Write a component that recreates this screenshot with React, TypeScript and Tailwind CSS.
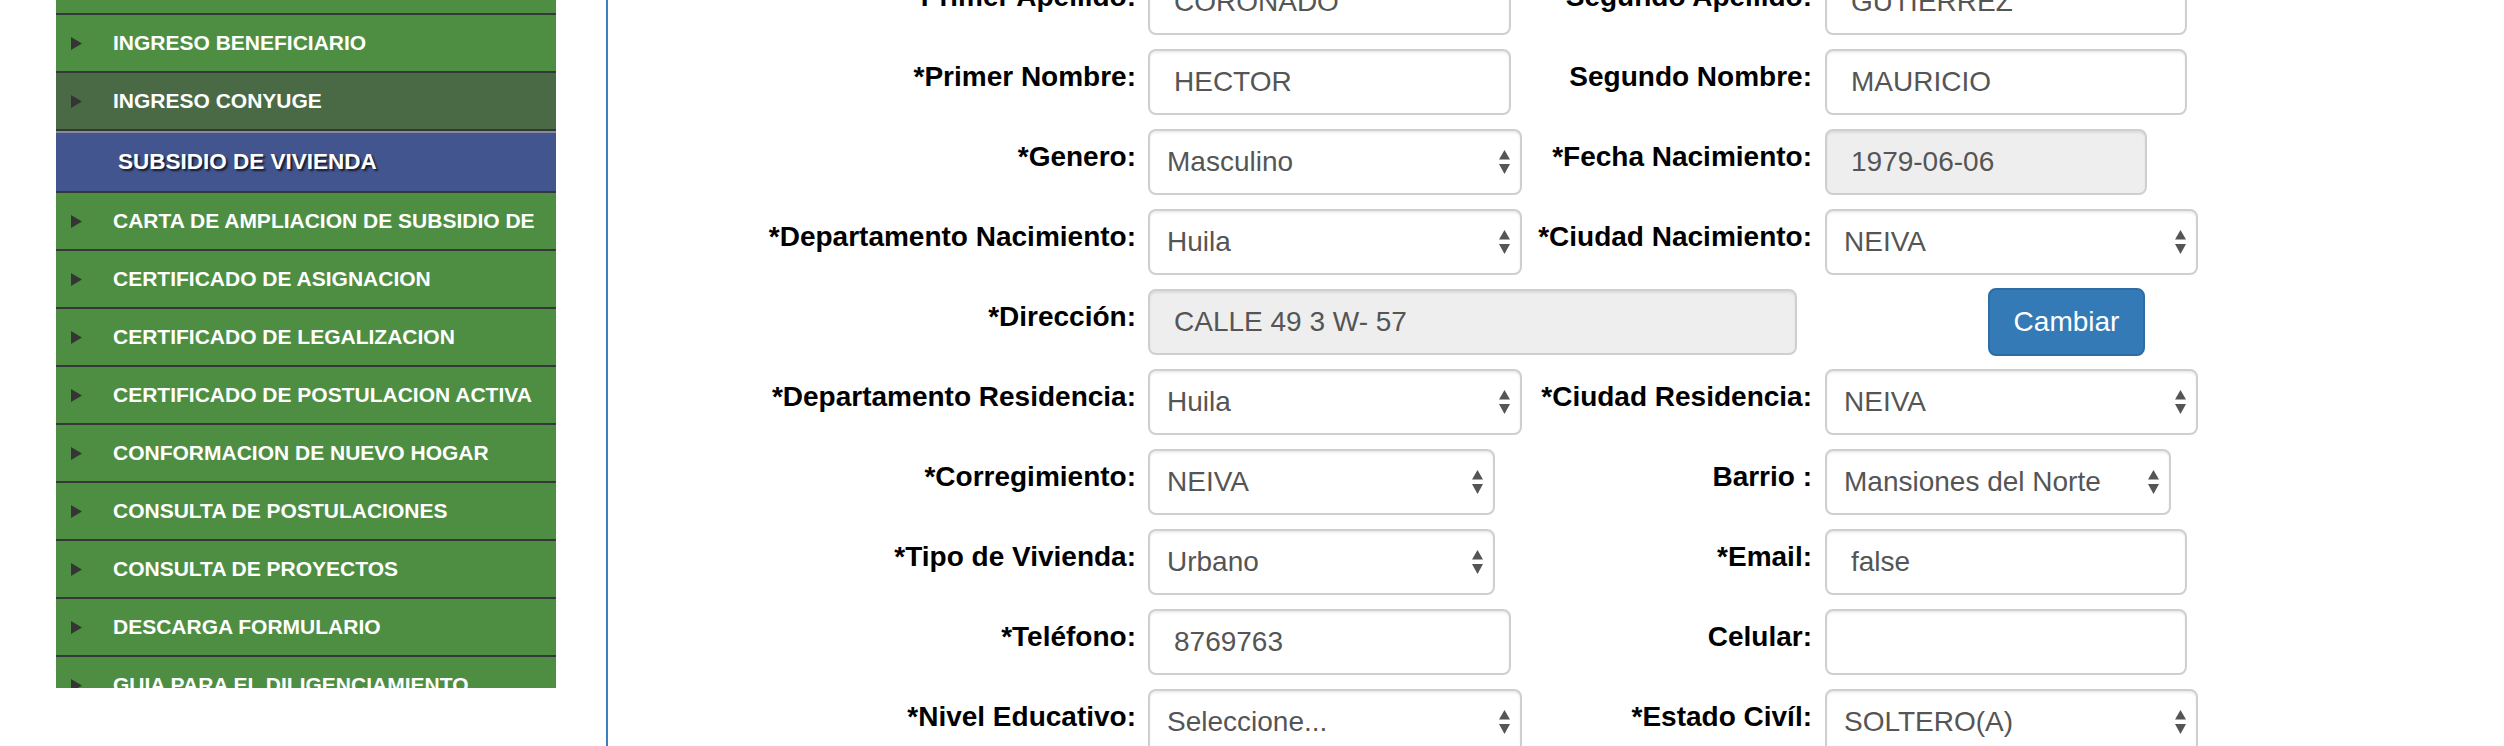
import React from 'react';

const MENU = [
  { label: 'INICIO', tone: 'green' },
  { label: 'INGRESO BENEFICIARIO', tone: 'green' },
  { label: 'INGRESO CONYUGE', tone: 'hover' },
  { label: 'SUBSIDIO DE VIVIENDA', tone: 'active' },
  { label: 'CARTA DE AMPLIACION DE SUBSIDIO DE', tone: 'green' },
  { label: 'CERTIFICADO DE ASIGNACION', tone: 'green' },
  { label: 'CERTIFICADO DE LEGALIZACION', tone: 'green' },
  { label: 'CERTIFICADO DE POSTULACION ACTIVA', tone: 'green' },
  { label: 'CONFORMACION DE NUEVO HOGAR', tone: 'green' },
  { label: 'CONSULTA DE POSTULACIONES', tone: 'green' },
  { label: 'CONSULTA DE PROYECTOS', tone: 'green' },
  { label: 'DESCARGA FORMULARIO', tone: 'green' },
  { label: 'GUIA PARA EL DILIGENCIAMIENTO', tone: 'green' },
];

function Caret() {
  return (
    <svg width="11" height="13" viewBox="0 0 11 13" className="shrink-0">
      <polygon points="0,0 11,6.5 0,13" fill="#353535" />
    </svg>
  );
}

function MenuItem({ label, tone }: { label: string; tone: string }) {
  if (tone === 'active') {
    return (
      <div className="h-[62px] border-t-2 border-b-2 border-t-[#878c9b] border-b-[#35383b] bg-[#43558f] flex items-center pl-[62px]">
        <span className="text-[22.5px] font-bold text-white whitespace-nowrap [text-shadow:2px_2px_2px_rgba(0,0,0,0.7)]">
          {label}
        </span>
      </div>
    );
  }
  return (
    <div
      className={
        tone === 'hover'
          ? 'h-[58px] border-b-2 border-[#35383b] bg-[#4a6a45] flex items-center pl-[15px]'
          : 'h-[58px] border-b-2 border-[#35383b] bg-[#4e8e43] flex items-center pl-[15px]'
      }
    >
      <Caret />
      <span className="ml-[31px] text-[21px] font-bold text-white whitespace-nowrap">{label}</span>
    </div>
  );
}

function Label({ text, width }: { text: string; width: string }) {
  return (
    <div className={`${width} shrink-0 text-right pt-[8px] text-[28px] leading-[40px] font-bold text-black whitespace-nowrap`}>
      {text}
    </div>
  );
}

function TextBox({ value, width, disabled }: { value: string; width: string; disabled?: boolean }) {
  return (
    <input
      readOnly
      value={value}
      className={`${width} h-[66px] shrink-0 border-2 border-[#cfcfcf] rounded-[8px] px-[24px] text-[28px] text-[#555] outline-none shadow-[inset_0_2px_2px_rgba(0,0,0,0.075)] ${
        disabled ? 'bg-[#eeeeee]' : 'bg-white'
      }`}
    />
  );
}

function SelectBox({ value, width }: { value: string; width: string }) {
  return (
    <div className={`${width} h-[66px] shrink-0 relative`}>
      <select
        value={value}
        onChange={() => {}}
        className="w-full h-full appearance-none border-2 border-[#cfcfcf] rounded-[8px] pl-[17px] pr-[36px] text-[28px] text-[#555] bg-white outline-none shadow-[inset_0_2px_2px_rgba(0,0,0,0.075)]"
      >
        <option value={value}>{value}</option>
      </select>
      {/* double arrow like the native select */}
      <svg
        width="11"
        height="24"
        viewBox="0 0 11 24"
        className="absolute right-[12px] top-1/2 -translate-y-1/2 pointer-events-none"
      >
        <polygon points="0,9.5 5.5,0 11,9.5" fill="#555" />
        <polygon points="0,14 11,14 5.5,24" fill="#555" />
      </svg>
    </div>
  );
}

function Row({ children }: { children: React.ReactNode }) {
  return <div className="flex items-start h-[66px]">{children}</div>;
}

export default function App() {
  const L1 = 'w-[528px]';
  const L2 = 'w-[282px]';

  return (
    <div className="w-[2504px] h-[746px] overflow-hidden bg-white flex items-start font-['Liberation_Sans',Arial,sans-serif]">
      {/* Side menu */}
      <div className="ml-[56px] w-[500px] h-[688px] overflow-hidden shrink-0">
        <div className="-mt-[43px]">
          {MENU.map((m) => (
            <MenuItem key={m.label} label={m.label} tone={m.tone} />
          ))}
        </div>
      </div>

      {/* Form panel */}
      <div className="ml-[50px] h-[746px] flex-1 border-l-2 border-[#3a7fc0] overflow-hidden">
        <div className="-mt-[31px] flex flex-col gap-[14px]">
          <Row>
            <Label text="*Primer Apellido:" width={L1} />
            <div className="ml-[12px] w-[382px] shrink-0">
              <TextBox value="CORONADO" width="w-[363px]" />
            </div>
            <Label text="Segundo Apellido:" width={L2} />
            <div className="ml-[13px]">
              <TextBox value="GUTIERREZ" width="w-[362px]" />
            </div>
          </Row>

          <Row>
            <Label text="*Primer Nombre:" width={L1} />
            <div className="ml-[12px] w-[382px] shrink-0">
              <TextBox value="HECTOR" width="w-[363px]" />
            </div>
            <Label text="Segundo Nombre:" width={L2} />
            <div className="ml-[13px]">
              <TextBox value="MAURICIO" width="w-[362px]" />
            </div>
          </Row>

          <Row>
            <Label text="*Genero:" width={L1} />
            <div className="ml-[12px] w-[382px] shrink-0">
              <SelectBox value="Masculino" width="w-[374px]" />
            </div>
            <Label text="*Fecha Nacimiento:" width={L2} />
            <div className="ml-[13px]">
              <TextBox value="1979-06-06" width="w-[322px]" disabled />
            </div>
          </Row>

          <Row>
            <Label text="*Departamento Nacimiento:" width={L1} />
            <div className="ml-[12px] w-[382px] shrink-0">
              <SelectBox value="Huila" width="w-[374px]" />
            </div>
            <Label text="*Ciudad Nacimiento:" width={L2} />
            <div className="ml-[13px]">
              <SelectBox value="NEIVA" width="w-[373px]" />
            </div>
          </Row>

          <Row>
            <Label text="*Dirección:" width={L1} />
            <div className="ml-[12px]">
              <TextBox value="CALLE 49 3 W- 57" width="w-[649px]" disabled />
            </div>
            <button className="ml-[191px] -mt-px w-[157px] h-[68px] shrink-0 rounded-[8px] border-2 border-[#2e6da4] bg-[#337ab7] text-white text-[28px]">
              Cambiar
            </button>
          </Row>

          <Row>
            <Label text="*Departamento Residencia:" width={L1} />
            <div className="ml-[12px] w-[382px] shrink-0">
              <SelectBox value="Huila" width="w-[374px]" />
            </div>
            <Label text="*Ciudad Residencia:" width={L2} />
            <div className="ml-[13px]">
              <SelectBox value="NEIVA" width="w-[373px]" />
            </div>
          </Row>

          <Row>
            <Label text="*Corregimiento:" width={L1} />
            <div className="ml-[12px] w-[382px] shrink-0">
              <SelectBox value="NEIVA" width="w-[347px]" />
            </div>
            <Label text="Barrio :" width={L2} />
            <div className="ml-[13px]">
              <SelectBox value="Mansiones del Norte" width="w-[346px]" />
            </div>
          </Row>

          <Row>
            <Label text="*Tipo de Vivienda:" width={L1} />
            <div className="ml-[12px] w-[382px] shrink-0">
              <SelectBox value="Urbano" width="w-[347px]" />
            </div>
            <Label text="*Email:" width={L2} />
            <div className="ml-[13px]">
              <TextBox value="false" width="w-[362px]" />
            </div>
          </Row>

          <Row>
            <Label text="*Teléfono:" width={L1} />
            <div className="ml-[12px] w-[382px] shrink-0">
              <TextBox value="8769763" width="w-[363px]" />
            </div>
            <Label text="Celular:" width={L2} />
            <div className="ml-[13px]">
              <TextBox value="" width="w-[362px]" />
            </div>
          </Row>

          <Row>
            <Label text="*Nivel Educativo:" width={L1} />
            <div className="ml-[12px] w-[382px] shrink-0">
              <SelectBox value="Seleccione..." width="w-[374px]" />
            </div>
            <Label text="*Estado Civíl:" width={L2} />
            <div className="ml-[13px]">
              <SelectBox value="SOLTERO(A)" width="w-[373px]" />
            </div>
          </Row>
        </div>
      </div>
    </div>
  );
}
